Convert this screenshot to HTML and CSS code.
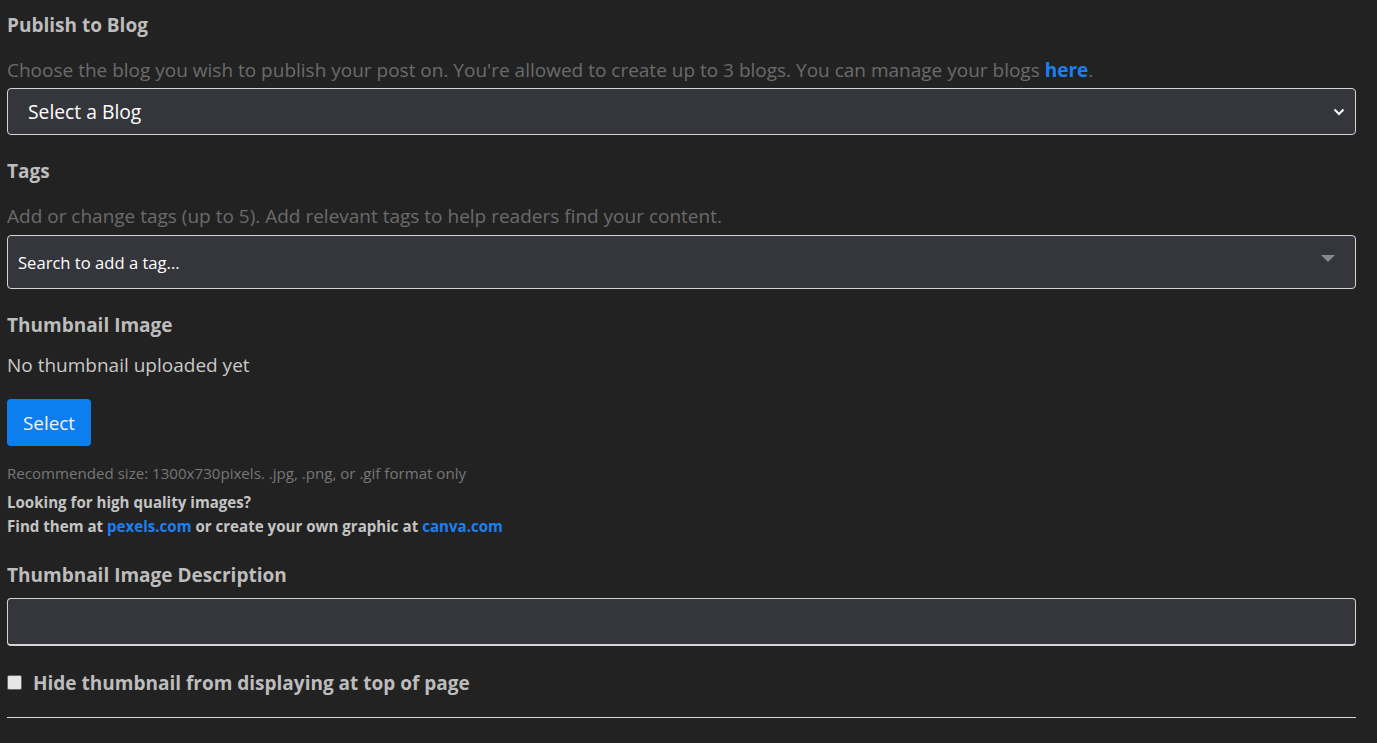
FILE: index.html
```html
<!DOCTYPE html>
<html>
<head>
<meta charset="utf-8">
<link rel="stylesheet" href="styles.css">
</head>
<body>
<div class="page">
  <section class="field f-blog">
    <h3 class="label">Publish to Blog</h3>
    <p class="help">Choose the blog you wish to publish your post on. You're allowed to create up to 3 blogs. You can manage your blogs <a class="link-strong" href="#">here</a>.</p>
    <div class="select">
      <span class="select-text">Select a Blog</span>
      <svg class="chev" width="12" height="8" viewBox="0 0 12 8"><path d="M1.5 1.5 L6 6 L10.5 1.5" fill="none" stroke="#fff" stroke-width="2"/></svg>
    </div>
  </section>

  <section class="field f-tags">
    <h3 class="label">Tags</h3>
    <p class="help">Add or change tags (up to 5). Add relevant tags to help readers find your content.</p>
    <div class="tagbox">
      <span class="tag-placeholder">Search to add a tag...</span>
      <svg class="caret" width="14" height="8" viewBox="0 0 14 8"><path d="M0 0 H14 L7 7 Z" fill="#8a8a8a"/></svg>
    </div>
  </section>

  <section class="field f-thumb">
    <h3 class="label">Thumbnail Image</h3>
    <p class="status">No thumbnail uploaded yet</p>
    <button class="btn">Select</button>
    <p class="small">Recommended size: 1300x730pixels. .jpg, .png, or .gif format only</p>
    <p class="tip">Looking for high quality images?<br>Find them at <a href="#">pexels.com</a> or create your own graphic at <a href="#">canva.com</a></p>
  </section>

  <section class="field f-desc">
    <h3 class="label">Thumbnail Image Description</h3>
    <div class="input"></div>
  </section>

  <label class="check">
    <span class="box"></span>
    <span class="check-text">Hide thumbnail from displaying at top of page</span>
  </label>
  <hr class="rule">
</div>
</body>
</html>
```

FILE: styles.css
```css
html, body {
  margin: 0;
  padding: 0;
  background: #222222;
}
body {
  font-family: "Open Sans", "Noto Sans", sans-serif;
  color: #c8c8c8;
}
.page {
  width: 1349px;
  margin-left: 7px;
  padding-top: 12px;
}
.label {
  margin: 0;
  font-size: 19px;
  font-weight: 700;
  color: #bdbdbd;
  line-height: 26px;
}
.help {
  margin: 20px 0 0;
  font-size: 19px;
  color: #6b6b6b;
  line-height: 24px;
}
.link-strong {
  color: #1a80f2;
  font-weight: 700;
  text-decoration: none;
}
.select {
  margin-top: 6px;
  height: 45px;
  border: 1px solid #d4d4d4;
  border-radius: 4px;
  background: #35363b;
  display: flex;
  align-items: center;
  justify-content: space-between;
  padding: 0 10px 0 20px;
}
.select-text {
  font-size: 19.3px;
  color: #ffffff;
}
.f-tags { margin-top: 23px; }
.tagbox {
  margin-top: 7px;
  height: 52px;
  border: 1px solid #d4d4d4;
  border-radius: 4px;
  background: #35363b;
  display: flex;
  align-items: center;
  justify-content: space-between;
  padding: 0 20px 0 10px;
}
.caret { margin-top: -6px; }
.tag-placeholder {
  font-size: 16.6px;
  color: #ffffff;
}
.f-thumb { margin-top: 23px; }
.status {
  margin: 14px 0 0;
  font-size: 19px;
  line-height: 26px;
  color: #c9c9c9;
}
.btn {
  display: block;
  margin-top: 21px;
  width: 84px;
  height: 47px;
  background: #0d7ef0;
  border: none;
  border-radius: 4px;
  color: #f2f2f2;
  font-family: inherit;
  font-size: 18.9px;
  padding: 0;
}
.small {
  margin: 17px 0 0;
  font-size: 15.1px;
  color: #777;
  line-height: 20px;
}
.tip {
  margin: 7px 0 0;
  font-size: 15.1px;
  font-weight: 700;
  line-height: 24px;
  color: #c4c4c4;
}
.tip a {
  color: #1a80f2;
  text-decoration: none;
}
.f-desc { margin-top: 24px; }
.input {
  margin-top: 10px;
  height: 45px;
  border: 1px solid #d4d4d4;
  border-bottom-width: 2px;
  border-radius: 4px;
  background: #35363b;
}
.check {
  display: flex;
  align-items: center;
  margin-top: 24px;
  gap: 11px;
}
.box {
  width: 13px;
  height: 13px;
  background: #e6e6e6;
  border: 1px solid #666;
  border-radius: 2px;
  margin-top: -2px;
}
.check-text {
  font-size: 19px;
  font-weight: 700;
  color: #bdbdbd;
}
.rule {
  margin: 21px 0 0;
  border: none;
  border-top: 1px solid #d8d8d8;
}
```
